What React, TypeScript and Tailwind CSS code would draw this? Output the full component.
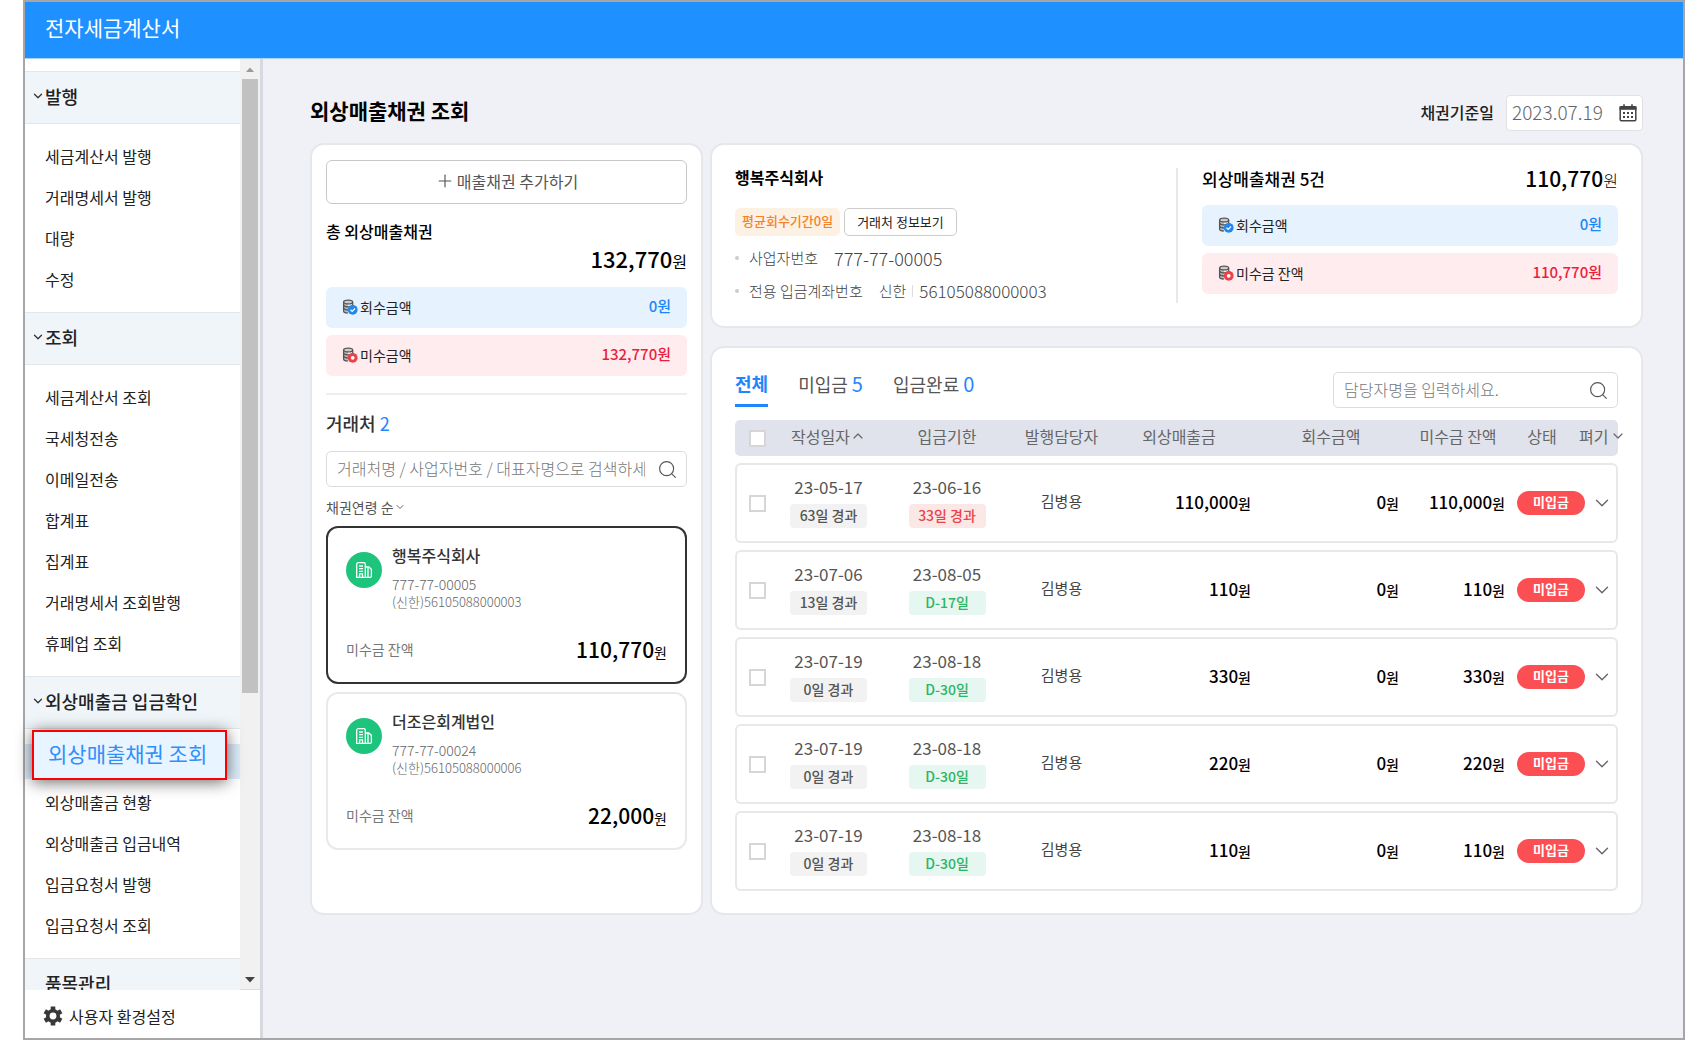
import React from "react";
import { ChevronDown, ChevronUp, Plus, Search } from "lucide-react";

const menu = [
  { title: "발행", items: ["세금계산서 발행", "거래명세서 발행", "대량", "수정"] },
  {
    title: "조회",
    items: ["세금계산서 조회", "국세청전송", "이메일전송", "합계표", "집계표", "거래명세서 조회발행", "휴폐업 조회"],
  },
  {
    title: "외상매출금 입금확인",
    items: ["외상매출채권 조회", "외상매출금 현황", "외상매출금 입금내역", "입금요청서 발행", "입금요청서 조회"],
  },
];

const ACTIVE = "외상매출채권 조회";

const clients = [
  { name: "행복주식회사", no: "777-77-00005", account: "(신한)56105088000003", amount: "110,770", selected: true },
  { name: "더조은회계법인", no: "777-77-00024", account: "(신한)56105088000006", amount: "22,000", selected: false },
];

const rows = [
  { date: "23-05-17", age: "63일 경과", due: "23-06-16", dueTag: "33일 경과", late: true, total: "110,000" },
  { date: "23-07-06", age: "13일 경과", due: "23-08-05", dueTag: "D-17일", late: false, total: "110" },
  { date: "23-07-19", age: "0일 경과", due: "23-08-18", dueTag: "D-30일", late: false, total: "330" },
  { date: "23-07-19", age: "0일 경과", due: "23-08-18", dueTag: "D-30일", late: false, total: "220" },
  { date: "23-07-19", age: "0일 경과", due: "23-08-18", dueTag: "D-30일", late: false, total: "110" },
];

function CoinsIcon({ tone }: { tone: "blue" | "red" }) {
  return (
    <svg viewBox="0 0 16 16" className="size-4 shrink-0" fill="none" aria-hidden="true">
      <path d="M1.600 3.200v8.800c0 1.200 2 2 4.500 2V3.200z" fill="#bbb" />
      <path d="M1.600 3.200v8.800c0 1.200 1.800 2 4.200 2M10.700 3.200v4" stroke="#555" strokeWidth="1.300" />
      <ellipse cx="6.150" cy="3" rx="4.550" ry="1.900" fill="#ccc" stroke="#555" strokeWidth="1.300" />
      <path d="M1.600 6.200c.6 1.100 2.400 1.700 4.600 1.700 2 0 3.700-.5 4.500-1.500M1.600 9.200c.6 1.100 2.400 1.700 4.400 1.700" stroke="#555" strokeWidth="1.300" />
      <circle cx="10.700" cy="10.800" r="4.900" fill={tone === "blue" ? "#1f87ee" : "#ee4048"} />
      {tone === "blue" ? (
        <path d="m8.500 10.800 1.700 1.600 2.800-2.900" stroke="#fff" strokeWidth="1.200" />
      ) : (
        <circle cx="10.700" cy="10.800" r="1.900" fill="#fff" />
      )}
    </svg>
  );
}

function BuildingIcon() {
  return (
    <svg viewBox="0 0 18 18" className="size-[18px]" fill="none" stroke="#fff" strokeWidth="1.300" aria-hidden="true">
      <path d="M1.700 16.200V3.200c0-.9.6-1.500 1.500-1.500h5.600c.9 0 1.500.6 1.500 1.500v13M.9 16.300h14.300c.7 0 1.200-.5 1.200-1.200V8.200L13.800 6h-3.400" />
      <path d="M4 5h4M4 7.700h4M4 10.300h4M4.600 16v-3.200h2.900V16M13 6v10" />
    </svg>
  );
}

function CalendarIcon() {
  return (
    <svg viewBox="0 0 18 18" className="size-[18px] shrink-0" fill="none" aria-hidden="true">
      <rect x="1.200" y="2.800" width="15.600" height="14" rx="1" stroke="#444" strokeWidth="1.500" />
      <path d="M.5 2.300h17v3.500H.5z" fill="#444" />
      <path d="M5 .3v3M13 .3v3" stroke="#444" strokeWidth="1.600" />
      <g fill="#444">
        <path d="M4 8h2v2H4zM8 8h2v2H8zM12 8h2v2h-2zM4 12h2v2H4zM8 12h2v2H8zM12 12h2v2h-2z" />
      </g>
    </svg>
  );
}

function GearIcon() {
  return (
    <svg viewBox="0 0 20 20" className="size-5" fill="none" aria-hidden="true">
      <circle cx="10" cy="10" r="5.200" stroke="#383838" strokeWidth="3.600" />
      <g stroke="#383838" strokeWidth="4.600">
        <path d="M10 .5v4M10 15.500v4" />
        <path d="M10 .5v4M10 15.500v4" transform="rotate(60 10 10)" />
        <path d="M10 .5v4M10 15.500v4" transform="rotate(120 10 10)" />
      </g>
    </svg>
  );
}

function Money({ value, className, unitClass }: { value: string; className: string; unitClass: string }) {
  return (
    <span className={`whitespace-nowrap text-black ${className}`}>
      {value}
      <span className={unitClass}>원</span>
    </span>
  );
}

function SummaryBar({ tone, label, value }: { tone: "blue" | "red"; label: string; value: string }) {
  const look = tone === "blue" ? "bg-[#e6f3fe] text-[#1e86f5]" : "bg-[#ffecee] text-[#ea1f3f]";
  return (
    <div className={`flex h-[41px] items-center rounded-md px-4 pb-0.5 ${look}`}>
      <CoinsIcon tone={tone} />
      <span className="ml-0.5 text-sm text-[#222]">{label}</span>
      <span className="ml-auto text-[15px] font-medium">{value}</span>
    </div>
  );
}

function SearchBox({ id, label, placeholder, className }: { id: string; label: string; placeholder: string; className: string }) {
  return (
    <div className={`flex h-9 items-center rounded-[5px] border border-[#dcdcdc] bg-white pr-2 pl-2.5 text-base ${className}`}>
      <label htmlFor={id} className="sr-only">{label}</label>
      <input id={id} type="text" placeholder={placeholder} className="min-w-0 flex-1 pb-0.5 font-light outline-none placeholder:text-[#777]" />
      <Search className="ml-3 size-[21px] text-[#555]" strokeWidth={1.300} />
    </div>
  );
}

function Sidebar() {
  return (
    <aside className="flex w-[238px] shrink-0 flex-col border-r-[3px] border-[#d8d9de] bg-white">
      <div className="flex min-h-0 flex-1 border-b border-[#ddd]">
        <nav className="min-w-0 flex-1 pt-3">
          {menu.map((group) => (
            <section key={group.title}>
              <h2 className="flex h-[53px] items-center border-y border-[#e3e7ea] bg-[#f0f5f9] pb-1 pl-1.5 text-lg leading-6 font-medium text-[#222]">
                <ChevronDown className="size-[14px] text-[#333]" strokeWidth={2.200} />
                {group.title}
              </h2>
              <ul className="py-3">
                {group.items.map((item) =>
                  item === ACTIVE ? (
                    <li key={item} className="relative flex h-[41px] items-center">
                      <span className="h-[35px] w-full bg-[#dcecfa]" />
                      <a
                        href="#active"
                        aria-current="page"
                        className="absolute -top-[11px] left-[7px] flex h-[50px] w-[195px] items-center border-2 border-[#ff0000] bg-[#e8f4ff] pb-0.5 pl-3.5 text-[21px] whitespace-nowrap text-[#2e90fa] shadow-[0_2px_16px_rgba(0,0,0,0.6)]"
                      >
                        {item}
                      </a>
                    </li>
                  ) : (
                    <li key={item} className="flex h-[41px] items-center pb-0.5 pl-5 text-base text-[#222]">
                      <a href="#menu">{item}</a>
                    </li>
                  ),
                )}
              </ul>
            </section>
          ))}
          <h2 className="h-8 overflow-hidden border-t border-[#e3e7ea] bg-[#f0f5f9] pt-3 pl-5 text-lg leading-6 font-medium text-[#222]">품목관리</h2>
        </nav>
        <div className="flex w-5 flex-col items-center bg-[#f1f1f1]" aria-hidden="true">
          <svg viewBox="0 0 20 20" className="size-5"><path d="M6 13h8l-4-4.500z" fill="#999" /></svg>
          <div className="w-4 flex-[615] bg-[#c1c1c1]" />
          <div className="flex-[276]" />
          <svg viewBox="0 0 20 20" className="size-5"><path d="M5 8h10l-5 5.500z" fill="#444" /></svg>
        </div>
      </div>
      <button type="button" className="flex h-12 items-center gap-1.5 pt-1 pl-[18px] text-base text-[#222]">
        <GearIcon />
        사용자 환경설정
      </button>
    </aside>
  );
}

function ClientPanel() {
  return (
    <section className="w-[393px] shrink-0 rounded-[14px] border-2 border-[#e6e7ea] bg-white px-3.5 pt-[15px]">
      <button type="button" className="flex h-11 w-full items-center justify-center gap-0.5 rounded-md border border-[#c9c9c9] pb-0.5 text-[#555]">
        <Plus className="size-5" strokeWidth={1.400} />
        매출채권 추가하기
      </button>
      <h2 className="mt-[15px] leading-6 font-medium text-black">총 외상매출채권</h2>
      <p className="text-right leading-[30px]">
        <Money value="132,770" className="text-[22px] font-medium" unitClass="text-base font-normal" />
      </p>
      <div className="mt-[11px] flex flex-col gap-[7px]">
        <SummaryBar tone="blue" label="회수금액" value="0원" />
        <SummaryBar tone="red" label="미수금액" value="132,770원" />
      </div>
      <hr className="mt-[17px] border-t-2 border-[#eee]" />
      <h2 className="mt-4 text-lg leading-6 font-medium text-[#333]">
        거래처 <span className="font-normal text-[#1e86ff]">2</span>
      </h2>
      <SearchBox id="client-search" label="거래처 검색" placeholder="거래처명 / 사업자번호 / 대표자명으로 검색하세요" className="mt-4" />
      <div className="mt-2 flex h-6 items-center text-sm text-[#555]">
        <select aria-label="정렬 순서" className="appearance-none outline-none">
          <option>채권연령 순</option>
        </select>
        <ChevronDown className="size-3" strokeWidth={1.800} />
      </div>
      <div className="mt-[7px] flex flex-col gap-2">
        {clients.map((c) => (
          <article
            key={c.no}
            className={`h-[158px] rounded-xl border-2 px-[18px] pt-[15px] ${c.selected ? "border-[#333]" : "border-[#e9e9e9]"}`}
          >
            <div className="flex gap-2.5">
              <span className="mt-[9px] flex size-9 items-center justify-center rounded-full bg-[#1fc47c]">
                <BuildingIcon />
              </span>
              <div>
                <h3 className="leading-6 font-medium text-[#333]">{c.name}</h3>
                <p className="mt-2 text-sm leading-[18px] font-light text-[#666]">{c.no}</p>
                <p className="text-[13px] leading-[18px] font-light text-[#666]">{c.account}</p>
              </div>
            </div>
            <div className="mt-[22px] flex items-center justify-between leading-8">
              <span className="text-sm text-[#777]">미수금 잔액</span>
              <Money value={c.amount} className="text-[21px] font-medium" unitClass="text-sm font-normal" />
            </div>
          </article>
        ))}
      </div>
    </section>
  );
}

function ClientSummary() {
  return (
    <section className="flex h-[185px] rounded-[14px] border-2 border-[#e6e7ea] bg-white px-[23px]">
      <div className="min-w-0 flex-1 pt-5">
        <h2 className="leading-6 font-bold text-black">행복주식회사</h2>
        <div className="mt-[19px] flex gap-1">
          <span className="flex h-7 items-center rounded-[5px] bg-[#fdf1e4] px-[7px] pb-0.5 text-[13px] font-medium text-[#f5822b]">평균회수기간0일</span>
          <button type="button" className="h-7 rounded-[5px] border border-[#ccc] px-3 text-[13px] text-[#222]">거래처 정보보기</button>
        </div>
        <ul className="mt-1 text-[15px] font-light text-[#444]">
          <li className="flex h-9 items-center">
            <span className="mr-2.5 size-1 rounded-full bg-[#ccc]" />
            사업자번호
            <span className="ml-4 text-lg">777-77-00005</span>
          </li>
          <li className="flex h-[30px] items-center">
            <span className="mr-2.5 size-1 rounded-full bg-[#ccc]" />
            전용 입금계좌번호
            <span className="ml-4">신한</span>
            <span className="mx-1.5 h-3 w-px bg-[#ddd]" />
            <span className="text-[17px]">56105088000003</span>
          </li>
        </ul>
      </div>
      <div className="mt-[23px] h-[135px] w-0.5 bg-[#e8e8e8]" />
      <div className="ml-6 w-[416px] pt-[18px]">
        <div className="flex h-8 items-center justify-between">
          <h2 className="text-[17px] font-medium text-black">외상매출채권 5건</h2>
          <Money value="110,770" className="text-[21px] font-medium" unitClass="text-base font-light" />
        </div>
        <div className="mt-2.5 flex flex-col gap-[7px]">
          <SummaryBar tone="blue" label="회수금액" value="0원" />
          <SummaryBar tone="red" label="미수금 잔액" value="110,770원" />
        </div>
      </div>
    </section>
  );
}

const cell = "border-y-2 border-[#e8e8e8] p-0";
const textCell = "border-y-2 border-[#e8e8e8] p-0 pb-[3px]";
const check = "block size-[17px] appearance-none border-2 border-[#d6d6d6] bg-white";
const tag = "mx-auto mt-[5px] flex h-6 w-[77px] items-center justify-center rounded pb-0.5 text-sm font-medium";

function BondTable() {
  return (
    <section className="flex-1 rounded-[14px] border-2 border-[#e6e7ea] bg-white px-[23px] pt-6">
      <div className="flex justify-between">
        <div className="-mt-0.5 flex h-9 gap-[30px] text-lg" role="tablist">
          <button type="button" role="tab" aria-selected="true" className="h-[37px] border-b-[3px] border-[#1e86ff] pb-2 leading-6 font-bold text-[#1e86ff]">전체</button>
          <button type="button" role="tab" aria-selected="false" className="h-7 text-[#555]">
            미입금 <span className="text-xl text-[#1e86ff]">5</span>
          </button>
          <button type="button" role="tab" aria-selected="false" className="h-7 text-[#555]">
            입금완료 <span className="text-xl text-[#1e86ff]">0</span>
          </button>
        </div>
        <SearchBox id="manager-search" label="담당자명" placeholder="담당자명을 입력하세요." className="w-[285px]" />
      </div>
      <table className="mt-[5px] w-full table-fixed border-separate border-spacing-x-0 border-spacing-y-[7px] text-[15px]">
        <colgroup>
          <col className="w-11" />
          <col className="w-[99px]" />
          <col className="w-[138px]" />
          <col className="w-[91px]" />
          <col className="w-[144px]" />
          <col />
          <col className="w-[106px]" />
          <col className="w-[90px]" />
          <col className="w-[23px]" />
        </colgroup>
        <thead>
          <tr className="h-9 text-base whitespace-nowrap text-[#666] [&>th]:bg-[#e0e3eb] [&>th]:p-0 [&>th]:font-normal [&>th+th]:pb-1">
            <th className="rounded-l-[5px]"><input type="checkbox" aria-label="전체 선택" className={`ml-3.5 ${check}`} /></th>
            <th><button type="button" className="inline-flex items-center">작성일자 <ChevronUp className="size-4" strokeWidth={1.800} /></button></th>
            <th>입금기한</th>
            <th>발행담당자</th>
            <th>외상매출금</th>
            <th><span className="ml-3">회수금액</span></th>
            <th><span className="ml-3">미수금 잔액</span></th>
            <th><span className="mr-4">상태</span></th>
            <th className="rounded-r-[5px]">
              <button type="button" className="-ml-4 flex items-center gap-0.5">펴기 <ChevronDown className="size-4 shrink-0" strokeWidth={1.800} /></button>
            </th>
          </tr>
        </thead>
        <tbody>
          {rows.map((r, i) => (
            <tr key={i} className="h-20">
              <td className={`rounded-l-md border-l-2 ${cell}`}><input type="checkbox" aria-label={`${r.date} 선택`} className={`ml-3 ${check}`} /></td>
              <td className={`text-center ${textCell}`}>
                <p className="text-[17px] leading-6 text-[#555]">{r.date}</p>
                <span className={`bg-[#f2f2f2] text-[#555] ${tag}`}>{r.age}</span>
              </td>
              <td className={`text-center ${textCell}`}>
                <p className="text-[17px] leading-6 text-[#555]">{r.due}</p>
                <span className={`${r.late ? "bg-[#fce7e7] text-[#ea4248]" : "bg-[#e6f6f1] text-[#2cb562]"} ${tag}`}>{r.dueTag}</span>
              </td>
              <td className={`text-center text-[#444] ${textCell}`}>김병용</td>
              <td className={`text-right ${textCell}`}><Money value={r.total} className="text-[17px] font-medium" unitClass="text-sm" /></td>
              <td className={`text-right ${textCell}`}><Money value="0" className="text-[17px] font-medium" unitClass="text-sm" /></td>
              <td className={`text-right ${textCell}`}><Money value={r.total} className="text-[17px] font-medium" unitClass="text-sm" /></td>
              <td className={cell}><span className="ml-3 flex h-6 w-[68px] items-center justify-center rounded-full bg-[#fc4f54] pb-0.5 text-[13px] font-bold text-white">미입금</span></td>
              <td className={`rounded-r-md border-r-2 ${cell}`}>
                <button type="button" aria-label="상세 펴기" className="-ml-1 flex"><ChevronDown className="size-[22px] shrink-0 text-[#666]" strokeWidth={1.500} /></button>
              </td>
            </tr>
          ))}
        </tbody>
      </table>
    </section>
  );
}

export default function App() {
  return (
    <div className="flex min-h-screen bg-white pl-[23px] font-['Noto_Sans_CJK_KR',sans-serif]">
      <div className="flex h-screen min-w-0 flex-1 flex-col overflow-visible border-2 border-[#a6a6a6] bg-[#f0f1f7]">
        <header className="flex h-[57px] shrink-0 items-center border-b border-[#a9d3fb] bg-[#1e90ff] pl-5 text-[21px] text-white">
          <h1 className="pb-1">전자세금계산서</h1>
        </header>
        <div className="flex min-h-0 flex-1">
          <Sidebar />
          <main className="flex min-w-0 flex-1 flex-col pr-10 pl-[47px]">
            <div className="mt-9 flex h-9 items-center justify-between">
              <h2 className="pb-1 text-[21px] font-bold text-black">외상매출채권 조회</h2>
              <div className="flex items-center gap-3">
                <label htmlFor="base-date" className="pb-0.5 font-medium text-[#222]">채권기준일</label>
                <div className="flex h-9 w-[137px] items-center rounded border border-[#e2e2e2] bg-white px-[5px]">
                  <input id="base-date" type="text" defaultValue="2023.07.19" className="min-w-0 flex-1 pb-0.5 text-[19px] font-light text-[#666] outline-none" />
                  <CalendarIcon />
                </div>
              </div>
            </div>
            <div className="mt-3 flex h-[772px] gap-[7px]">
              <ClientPanel />
              <div className="flex min-w-0 flex-1 flex-col gap-[18px]">
                <ClientSummary />
                <BondTable />
              </div>
            </div>
          </main>
        </div>
      </div>
    </div>
  );
}
